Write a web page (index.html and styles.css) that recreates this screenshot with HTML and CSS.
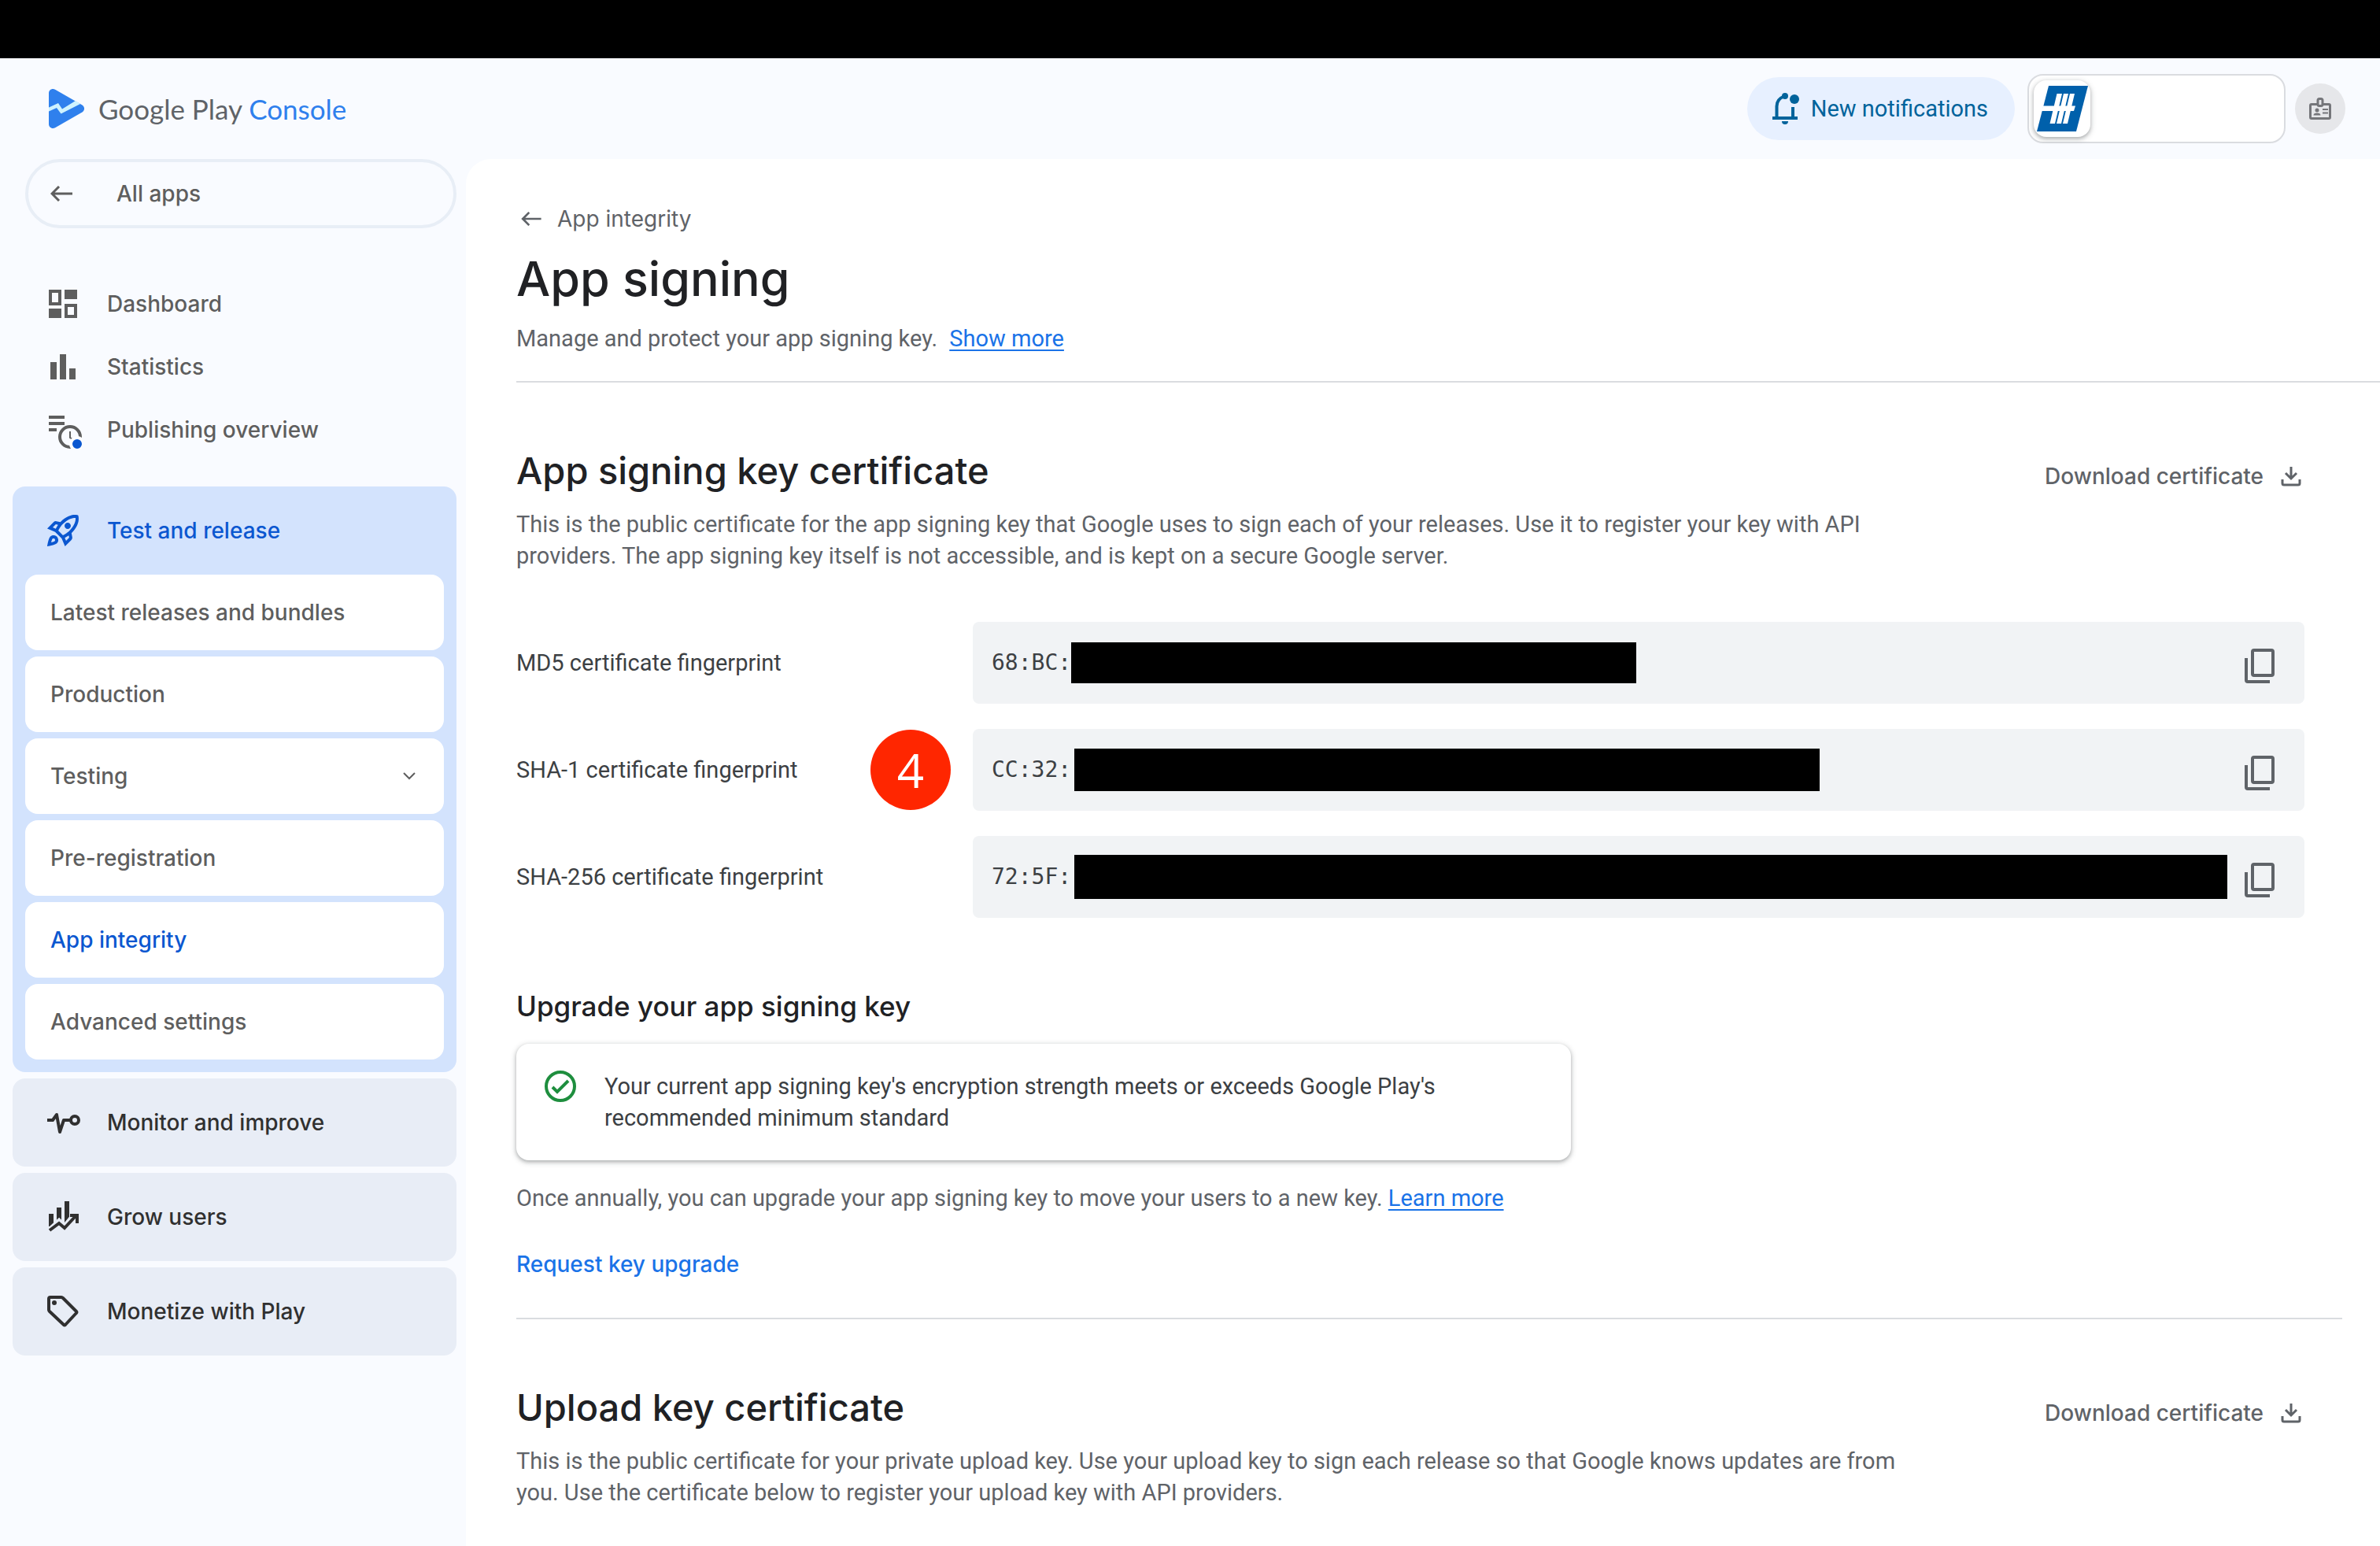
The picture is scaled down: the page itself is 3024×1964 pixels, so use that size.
FILE: index.html
```html
<!DOCTYPE html>
<html lang="en">
<head>
<meta charset="utf-8">
<meta name="viewport" content="width=device-width, initial-scale=1">
<title>App signing | Google Play Console</title>
<link rel="stylesheet" href="styles.css">
</head>
<body>
<svg class="sprite" aria-hidden="true">
  <symbol id="copy" viewBox="0 0 48 48">
    <rect x="14" y="4" width="26" height="32" rx="2" fill="none" stroke="currentColor" stroke-width="4"/>
    <path d="M6 14v28q0 2 2 2h28" fill="none" stroke="currentColor" stroke-width="4"/>
  </symbol>
  <symbol id="download" viewBox="0 0 26 26">
    <path d="M13 1v14M6 9l7 7 7-7M2 17v5q0 2 2 2h18q2 0 2-2v-5" fill="none" stroke="currentColor" stroke-width="3"/>
  </symbol>
  <symbol id="back" viewBox="0 0 28 20">
    <path d="M28 10H3M11 1L2 10l9 9" fill="none" stroke="currentColor" stroke-width="3"/>
  </symbol>
</svg>

<div class="topstrip"></div>

<header class="appbar">
  <a class="brand" href="#">
    <svg class="brand-mark" viewBox="0 0 45 50" aria-hidden="true">
      <path d="M0 5.500C0 1 4.500-1.500 8.500 1L42.500 20.500c3.400 2 3.400 7 0 9L8.500 49C4.500 51.500 0 49 0 44.500z" fill="#2f80ed"/>
      <path d="M0 23.500L12 18l5 7.500 17-10.500 6 4L15.500 31.500 10 24 0 28.500z" fill="#cff3ff"/>
    </svg>
    <span class="brand-name">Google Play <span class="brand-accent">Console</span></span>
  </a>
  <div class="appbar-actions">
    <button class="notify" type="button">
      <svg class="notify-icon" viewBox="0 0 36 40" aria-hidden="true">
        <path d="M0 32h32M5.500 31V17q0-9 9-12.500M26 31V18" fill="none" stroke="currentColor" stroke-width="4"/>
        <circle cx="16" cy="4" r="4" fill="currentColor"/>
        <circle cx="28" cy="8" r="6" fill="currentColor"/>
        <path d="M12 36h8a4 4 0 0 1-8 0z" fill="currentColor"/>
      </svg>
      New notifications
    </button>
    <button class="account" type="button" aria-label="Developer account">
      <span class="account-chip">
        <svg class="account-logo" viewBox="0 0 65 58" aria-hidden="true">
          <path d="M15 0h50L50 58H0z" fill="#0060ab"/>
          <path d="M25.500 10h6.500l-9 38h-6.500zM34 10h6l-9 38h-6zM42 10h6l-9 38h-6zM8 25.500h41l-2 6.500H6z" fill="#fff"/>
        </svg>
      </span>
    </button>
    <button class="avatar" type="button" aria-label="Account">
      <svg class="avatar-icon" viewBox="0 0 28 28" aria-hidden="true">
        <path d="M10 8.500H3q-1.500 0-1.500 1.500v15q0 1.500 1.500 1.500h22q1.500 0 1.500-1.500V10q0-1.500-1.500-1.500h-7" fill="none" stroke="currentColor" stroke-width="3"/>
        <rect x="11" y="1.500" width="6" height="9" rx="2" fill="none" stroke="currentColor" stroke-width="3"/>
        <circle cx="10" cy="16" r="2.500" fill="currentColor"/>
        <path d="M5.500 22.500q0-3 4.500-3t4.500 3zM17 14h7v2h-7zM17 18.500h7v2h-7z" fill="currentColor"/>
      </svg>
    </button>
  </div>
</header>

<div class="shell">
  <aside class="sidebar">
    <a class="all-apps" href="#"><svg class="arrow" aria-hidden="true"><use href="#back"/></svg>All apps</a>

    <nav class="nav" aria-label="Main">
      <ul class="nav-list">
        <li><a class="nav-link" href="#">
          <svg class="nav-icon" viewBox="0 0 48 48" aria-hidden="true"><g fill="none" stroke="currentColor" stroke-width="4"><path d="M8 8h12v16H8zM28 26h12v14H28z"/></g><path d="M26 6h16v12H26zM6 30h16v12H6z" fill="currentColor"/></svg>
          Dashboard</a></li>
        <li><a class="nav-link" href="#">
          <svg class="nav-icon" viewBox="0 0 48 48" aria-hidden="true"><path d="M8 18h8v22H8zM20 8h8v32h-8zM32 26h8v14h-8z" fill="currentColor"/></svg>
          Statistics</a></li>
        <li><a class="nav-link" href="#">
          <svg class="nav-icon" viewBox="0 0 48 48" aria-hidden="true">
            <path d="M6 8h20M6 16h20M6 24h10" fill="none" stroke="currentColor" stroke-width="4"/>
            <circle cx="33" cy="33" r="13" fill="#f9fbff" stroke="currentColor" stroke-width="4"/>
            <path d="M33 26v8l5 3" fill="none" stroke="currentColor" stroke-width="2"/>
            <circle cx="42" cy="42" r="8" fill="#0b57d0" stroke="#fff" stroke-width="4"/>
          </svg>
          Publishing overview</a></li>
      </ul>

      <section class="group group-open">
        <a class="group-head" href="#">
          <svg class="nav-icon" viewBox="0 0 24 24" aria-hidden="true"><path fill="currentColor" d="M6 15c-.83 0-1.580.34-2.120.88C2.700 17.060 2 22 2 22s4.940-.7 6.120-1.880A2.996 2.996 0 0 0 6 15zm.71 3.710c-.28.28-2.170.76-2.170.76s.47-1.880.76-2.170c.17-.19.42-.3.7-.3a1.003 1.003 0 0 1 .71 1.710zm10.710-5.060c6.360-6.360 4.240-11.310 4.240-11.310S16.710.22 10.350 6.580l-2.490-.5a2.030 2.030 0 0 0-1.810.55L2 10.690l5 2.140L11.170 17l2.140 5 4.050-4.050c.47-.47.68-1.150.55-1.810l-.49-2.490zM7.410 10.830l-1.910-.82 1.970-1.970 1.440.29c-.57.83-1.080 1.700-1.500 2.500zm6.580 7.670-.82-1.910c.8-.42 1.670-.93 2.490-1.500l.29 1.440-1.960 1.970zM16 12.240c-1.320 1.320-3.380 2.400-4.040 2.730l-2.930-2.930c.32-.65 1.400-2.710 2.730-4.040 4.680-4.680 8.230-3.990 8.230-3.990s.69 3.550-3.990 8.230zM15 11c1.100 0 2-.9 2-2s-.9-2-2-2-2 .9-2 2 .9 2 2 2z"/></svg>
          Test and release</a>
        <ul class="sub-list">
          <li><a class="sub-link" href="#">Latest releases and bundles</a></li>
          <li><a class="sub-link" href="#">Production</a></li>
          <li><a class="sub-link" href="#">Testing
            <svg class="chevron" viewBox="0 0 16 10" aria-hidden="true"><path d="M1 1l7 7 7-7" fill="none" stroke="currentColor" stroke-width="2"/></svg></a></li>
          <li><a class="sub-link" href="#">Pre-registration</a></li>
          <li><a class="sub-link sub-link-active" href="#" aria-current="page">App integrity</a></li>
          <li><a class="sub-link" href="#">Advanced settings</a></li>
        </ul>
      </section>

      <section class="group"><a class="group-head" href="#">
        <svg class="nav-icon" viewBox="0 0 48 48" aria-hidden="true"><path d="M4 21h7l5-7 4 22 5-15h9" fill="none" stroke="currentColor" stroke-width="4" stroke-linejoin="round"/><circle cx="39" cy="21" r="5" fill="none" stroke="currentColor" stroke-width="4"/></svg>
        Monitor and improve</a></section>
      <section class="group"><a class="group-head" href="#">
        <svg class="nav-icon" viewBox="0 0 48 48" aria-hidden="true"><path d="M6 20h6v16H6zM16 12h6v18h-6zM26 4h6v28h-6z" fill="currentColor"/><path d="M7 42l12-11 7 7 14-17" fill="none" stroke="#e8edf6" stroke-width="9"/><path d="M7 41l12-9 7 6 14-15M33 22h9v10" fill="none" stroke="currentColor" stroke-width="4"/></svg>
        Grow users</a></section>
      <section class="group"><a class="group-head" href="#">
        <svg class="nav-icon" viewBox="0 0 48 48" aria-hidden="true"><path d="M6 8q0-2 2-2h14q1 0 2 1l17 17q1 1 0 2L27 41q-1 1-2 0L7 24q-1-1-1-2z" fill="none" stroke="currentColor" stroke-width="4" stroke-linejoin="round"/><circle cx="13" cy="13" r="3" fill="currentColor"/></svg>
        Monetize with Play</a></section>
    </nav>
  </aside>

  <main class="panel">
    <div class="page-head">
      <a class="crumb" href="#"><svg class="arrow arrow-small" aria-hidden="true"><use href="#back"/></svg>App integrity</a>
      <h1 class="title">App signing</h1>
      <p class="lead">Manage and protect your app signing key. <a class="link link-spaced" href="#">Show more</a></p>
    </div>

    <section class="section">
      <div class="section-head">
        <h2 class="heading">App signing key certificate</h2>
        <button class="download" type="button">Download certificate<svg class="download-icon" aria-hidden="true"><use href="#download"/></svg></button>
      </div>
      <p class="text">This is the public certificate for the app signing key that Google uses to sign each of your releases. Use it to register your key with API providers. The app signing key itself is not accessible, and is kept on a secure Google server.</p>

      <dl class="prints">
        <div class="print">
          <dt class="print-label">MD5 certificate fingerprint</dt>
          <dd class="print-value"><code class="code">68:BC:</code><span class="redacted redacted-md5"></span>
            <button class="copy" type="button" aria-label="Copy MD5 fingerprint"><svg class="copy-icon" aria-hidden="true"><use href="#copy"/></svg></button></dd>
        </div>
        <div class="print">
          <dt class="print-label">SHA-1 certificate fingerprint <span class="step">4</span></dt>
          <dd class="print-value"><code class="code">CC:32:</code><span class="redacted redacted-sha1"></span>
            <button class="copy" type="button" aria-label="Copy SHA-1 fingerprint"><svg class="copy-icon" aria-hidden="true"><use href="#copy"/></svg></button></dd>
        </div>
        <div class="print">
          <dt class="print-label">SHA-256 certificate fingerprint</dt>
          <dd class="print-value"><code class="code">72:5F:</code><span class="redacted redacted-sha256"></span>
            <button class="copy" type="button" aria-label="Copy SHA-256 fingerprint"><svg class="copy-icon" aria-hidden="true"><use href="#copy"/></svg></button></dd>
        </div>
      </dl>

      <h3 class="subheading">Upgrade your app signing key</h3>
      <div class="status">
        <svg class="status-icon" viewBox="0 0 40 40" aria-hidden="true"><circle cx="20" cy="20" r="18" fill="none" stroke="#1e8e3e" stroke-width="4"/><path d="M10 21l6 6 14-14" fill="none" stroke="#1e8e3e" stroke-width="4"/></svg>
        <p class="status-text">Your current app signing key's encryption strength meets or exceeds Google Play's recommended minimum standard</p>
      </div>
      <p class="text">Once annually, you can upgrade your app signing key to move your users to a new key. <a class="link" href="#">Learn more</a></p>
      <button class="request" type="button">Request key upgrade</button>
    </section>

    <section class="section section-last">
      <div class="section-head">
        <h2 class="heading">Upload key certificate</h2>
        <button class="download" type="button">Download certificate<svg class="download-icon" aria-hidden="true"><use href="#download"/></svg></button>
      </div>
      <p class="text">This is the public certificate for your private upload key. Use your upload key to sign each release so that Google knows updates are from you. Use the certificate below to register your upload key with API providers.</p>
    </section>
  </main>
</div>
</body>
</html>
```

FILE: styles.css
```css
:root {
  --display: Inter, "Noto Sans", sans-serif;
  --body: Roboto, "Liberation Sans", sans-serif;
  --mono: "DejaVu Sans Mono", "Liberation Mono", monospace;
  --ink: #202124;
  --ink-soft: #3c4043;
  --muted: #5f6368;
  --nav: #5e5e5e;
  --blue: #1a73e8;
  --blue-deep: #0b57d0;
  --line: #dadce0;
  --surface: #f9fbff;
}

* { box-sizing: border-box; }

body {
  margin: 0;
  background: var(--surface);
  color: var(--ink);
  font: 400 29px/40px var(--body);
}

h1, h2, h3, p, ul, dl, dd { margin: 0; padding: 0; }
ul { list-style: none; }
a { color: inherit; text-decoration: none; }
svg { display: block; flex: none; }

button {
  margin: 0;
  padding: 0;
  border: 0;
  background: none;
  color: inherit;
  font: inherit;
  cursor: pointer;
}

.sprite { position: absolute; width: 0; height: 0; }

.topstrip { height: 74px; background: #000; }

/* App bar */
.appbar {
  display: flex;
  align-items: center;
  justify-content: space-between;
  height: 128px;
  padding: 0 44px 0 62px;
}
.brand { display: flex; align-items: center; gap: 18px; }
.brand-mark { width: 45px; height: 50px; }
.brand-name { font: 400 35px/48px Lato, sans-serif; color: var(--muted); }
.brand-accent { color: #2f80ed; }

.appbar-actions { display: flex; align-items: center; }
.notify {
  display: flex;
  align-items: center;
  gap: 13px;
  height: 80px;
  padding: 0 34px 0 32px;
  border-radius: 40px;
  background: #e7f0ff;
  color: #00639b;
}
.notify-icon { width: 36px; height: 40px; }
.account {
  width: 328px;
  height: 88px;
  margin: 0 12px 0 16px;
  padding: 6px;
  border: 2px solid var(--line);
  border-radius: 20px;
  background: #fff;
}
.account-chip {
  display: flex;
  align-items: center;
  justify-content: center;
  width: 72px;
  height: 72px;
  border-radius: 16px;
  background: #fff;
  box-shadow: 0 2px 4px rgba(60, 64, 67, .3), 0 2px 6px 2px rgba(60, 64, 67, .15);
}
.account-logo { width: 65px; height: 58px; }
.avatar {
  display: flex;
  align-items: center;
  justify-content: center;
  width: 64px;
  height: 64px;
  border-radius: 50%;
  background: #e6e7ea;
  color: #75767a;
}
.avatar-icon { width: 28px; height: 28px; }

/* Layout */
.shell { display: grid; grid-template-columns: 592px minmax(0, 1fr); }
.sidebar { padding: 0 12px 48px 16px; }
.panel {
  padding: 56px 0 0 64px;
  border-top-left-radius: 32px;
  background: #fff;
}

/* Sidebar */
.all-apps {
  display: flex;
  align-items: center;
  gap: 56px;
  height: 88px;
  margin-left: 16px;
  padding: 0 28px;
  border: 4px solid #e8eef6;
  border-radius: 44px;
  color: var(--nav);
  font: 500 28px/40px var(--display);
}
.arrow { width: 28px; height: 20px; }
.arrow-small { width: 26px; height: 18px; }
.nav {
  display: flex;
  flex-direction: column;
  gap: 8px;
  margin-top: 56px;
  font: 500 28px/40px var(--display);
}
.nav-list { padding-bottom: 24px; color: var(--nav); }
.nav-link, .group-head {
  display: flex;
  align-items: center;
  gap: 32px;
  height: 80px;
  padding-left: 40px;
}
.nav-icon { width: 48px; height: 48px; }
.group { border-radius: 16px; background: #e8edf6; color: #303030; }
.group-head { height: 112px; }
.group-open { padding-bottom: 16px; background: #d3e3fd; color: var(--blue-deep); }
.sub-list { display: grid; gap: 8px; padding: 0 16px; }
.sub-link {
  display: flex;
  align-items: center;
  justify-content: space-between;
  height: 96px;
  padding: 0 36px 0 32px;
  border-radius: 16px;
  background: #fff;
  color: var(--nav);
}
.sub-link-active { color: var(--blue-deep); }
.chevron { width: 16px; height: 10px; }

/* Page head */
.page-head { padding-bottom: 34px; border-bottom: 2px solid var(--line); }
.crumb {
  display: flex;
  align-items: center;
  gap: 20px;
  padding-left: 6px;
  color: var(--muted);
  font: 400 28px/40px var(--display);
}
.title { margin: 16px 0; font: 500 61px/80px var(--display); }
.lead { color: var(--muted); }
.link {
  color: var(--blue);
  text-decoration: underline;
  text-decoration-thickness: 2px;
  text-underline-offset: 4px;
}
.link-spaced { margin-left: 8px; }

/* Sections */
.section {
  margin-right: 48px;
  padding: 80px 48px 48px 0;
  border-bottom: 2px solid var(--line);
}
.section-last { border-bottom: 0; }
.section-head {
  display: flex;
  align-items: center;
  justify-content: space-between;
  margin-bottom: 16px;
}
.heading { font: 500 47px/64px var(--display); }
.download {
  display: flex;
  align-items: center;
  gap: 22px;
  padding: 14px 4px 0 0;
  color: var(--muted);
  font: 500 28px/40px var(--display);
}
.download-icon { width: 26px; height: 26px; }
.text { max-width: 1776px; color: var(--muted); }

.prints { display: grid; gap: 32px; margin: 64px 0 88px; }
.print { display: grid; grid-template-columns: 580px minmax(0, 1fr); }
.print-label {
  display: flex;
  align-items: center;
  justify-content: space-between;
  padding-right: 28px;
  color: var(--ink-soft);
}
.step {
  width: 102px;
  height: 102px;
  border-radius: 50%;
  background: #ff2600;
  color: #fff;
  font: 400 60px/102px "Open Sans", sans-serif;
  text-align: center;
}
.print-value {
  display: flex;
  align-items: center;
  height: 104px;
  padding: 0 32px 0 24px;
  border-radius: 8px;
  background: #f1f3f5;
}
.code { color: var(--ink-soft); font: 400 28px/40px var(--mono); }
.redacted { height: 52px; background: #000; }
.redacted-md5 { width: 718px; }
.redacted-sha1 { width: 947px; height: 54px; margin-left: 4px; }
.redacted-sha256 { width: 1465px; height: 56px; margin-left: 4px; }
.copy { margin-left: auto; padding-top: 8px; color: var(--muted); }
.copy-icon { width: 48px; height: 48px; }

.subheading { font: 500 35px/48px var(--display); }
.status {
  display: flex;
  gap: 36px;
  max-width: 1340px;
  margin: 24px 0 28px;
  padding: 34px 36px;
  border-radius: 16px;
  background: #fff;
  box-shadow: 0 2px 4px rgba(60, 64, 67, .3), 0 2px 6px 2px rgba(60, 64, 67, .15);
}
.status-icon { width: 40px; height: 40px; }
.status-text { color: var(--ink-soft); }
.request {
  display: block;
  margin-top: 44px;
  color: var(--blue);
  font: 500 28px/40px var(--display);
}
```
